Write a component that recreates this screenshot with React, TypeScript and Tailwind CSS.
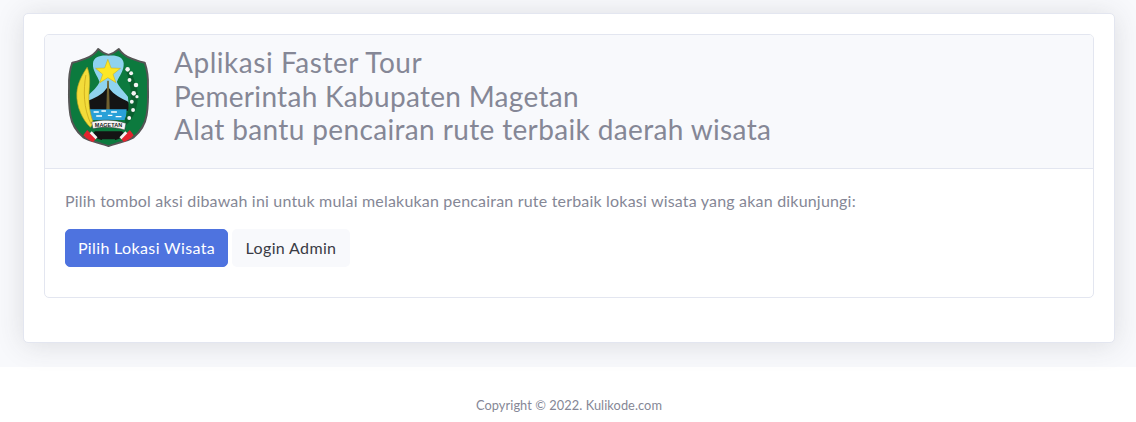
const Emblem = () => (
  <svg width="97" height="115" viewBox="0 0 300 345" preserveAspectRatio="none" className="block">
    <path d="M150 45 C140 42 128 36 118 27 C108 42 95 50 80 55 C66 60 52 66 38 68 C30 90 27 115 28 140 C27 170 27 195 32 225 C36 250 48 272 72 292 C95 305 125 308 150 318 C175 308 205 305 228 292 C252 272 264 250 268 225 C273 195 273 170 272 140 C273 115 270 90 262 68 C248 66 234 60 220 55 C205 50 192 42 182 27 C172 36 160 42 150 45 Z" fill="#0c7a3e" stroke="#555" strokeWidth="6" strokeLinejoin="round" />
    <path d="M150 47 C125 45 104 50 102 70 C100 92 116 108 122 125 C118 140 100 152 84 170 L82 190 L212 190 L210 170 C196 152 180 138 176 125 C184 108 198 92 197 70 C195 50 175 45 150 47 Z" fill="#8fd3ef" />
    <path d="M148 58 L158 84 L187 85 L164 103 L173 128 L148 113 L123 128 L132 103 L110 85 L138 84 Z" fill="#fde725" stroke="#c9a90f" strokeWidth="1.5" />
    <path d="M78 186 C105 175 132 165 144 145 L152 145 C166 165 190 175 212 186 L212 212 L82 212 Z" fill="#141414" />
    <path d="M146 122 L151 122 L154 215 L143 215 Z" fill="#6f6130" />
    <path d="M86 208 L206 208 L203 240 L100 240 Z" fill="#29a0d8" />
    <path d="M104 216 h16 M128 213 h14 M158 216 h18 M112 228 h18 M148 226 h14 M172 230 h18" stroke="#fff" strokeWidth="4" />
    <path d="M84 82 C94 105 92 130 90 155 C88 185 90 215 104 250 L94 262 C70 240 50 200 52 160 C54 130 68 105 84 82 Z" fill="#f3dc3a" stroke="#b9a51e" strokeWidth="2" />
    <path d="M80 105 C72 150 72 205 96 252" stroke="#caa91c" strokeWidth="2.5" fill="none" />
    <path d="M205 80 C225 100 250 150 238 195 C232 220 222 240 205 255 L200 238 C215 210 225 170 215 130 C212 110 205 95 200 85 Z" fill="#0a5f2f" />
    <g fill="#f4f4f4">
      <circle cx="209" cy="88" r="7" /><circle cx="220" cy="100" r="6" />
      <circle cx="215" cy="120" r="6" /><circle cx="235" cy="135" r="7" />
      <circle cx="228" cy="160" r="7" /><circle cx="238" cy="170" r="5" />
      <circle cx="222" cy="185" r="6" /><circle cx="226" cy="210" r="6" />
      <circle cx="214" cy="234" r="6" />
    </g>
    <path d="M108 274 L192 274 L205 288 L172 300 L128 300 L95 288 Z" fill="#141414" />
    <path d="M72 286 L84 270 L112 296 L102 306 C92 302 80 296 72 286 Z" fill="#e3232f" />
    <path d="M228 286 L216 270 L188 296 L198 306 C208 302 220 296 228 286 Z" fill="#e3232f" />
    <path d="M92 280 L98 274 L116 292 L110 298 Z" fill="#f4f4f4" />
    <path d="M208 280 L202 274 L184 292 L190 298 Z" fill="#f4f4f4" />
    <path d="M130 298 L170 298 L172 309 L150 314 L128 309 Z" fill="#0c7a3e" />
    <path d="M98 246 C130 238 170 238 204 250 L200 270 C170 260 130 260 102 266 Z" fill="#f6f6f6" stroke="#333" strokeWidth="1.5" />
    <text x="150" y="260" textAnchor="middle" fontSize="17" fontWeight="700" fontFamily="Liberation Sans, sans-serif" fill="#222">MAGETAN</text>
  </svg>
);

export default function App() {
  return (
    <div className="min-h-[422px] bg-white font-['Lato','Noto_Sans',sans-serif] text-[#858796]">
      <div className="h-[367px] bg-[#f8f9fc] pt-[13px] pl-[23px] pr-[21px]">
        <div className="h-[330px] bg-white rounded-[5px] border border-[#e3e6f0] p-5 shadow-[0_2px_28px_0_rgba(58,59,69,0.15)]">
          <div className="h-[264px] rounded-[5px] border border-[#e3e6f0] overflow-hidden">
            <div className="h-[134px] bg-[#f8f9fc] border-b border-[#e3e6f0] flex items-start pl-[15px]">
              <div className="mt-[5px] shrink-0"><Emblem /></div>
              <div className="ml-[17px] mt-[11px] text-[28px] leading-[33.6px] text-[#858796]">
                <div className="tracking-[0.54px]">Aplikasi Faster Tour</div>
                <div className="tracking-[0.3px]">Pemerintah Kabupaten Magetan</div>
                <div className="tracking-[0.36px]">Alat bantu pencairan rute terbaik daerah wisata</div>
              </div>
            </div>
            <div className="px-5 pt-[20px]">
              <p className="text-base leading-6 tracking-[0.19px]">Pilih tombol aksi dibawah ini untuk mulai melakukan pencairan rute terbaik lokasi wisata yang akan dikunjungi:</p>
              <div className="mt-[16px] flex gap-1">
                <button className="h-[38px] w-[163px] rounded-[5px] bg-[#4e73df] text-white text-base tracking-[0.36px] border border-[#4e73df]">Pilih Lokasi Wisata</button>
                <button className="h-[38px] w-[118px] rounded-[5px] bg-[#f8f9fc] text-[#3a3b45] text-base tracking-[0.36px]">Login Admin</button>
              </div>
            </div>
          </div>
        </div>
      </div>
      <div className="h-[55px] flex items-center justify-center text-[12.8px] tracking-[0.07px] pt-[22px] pl-[2px]">Copyright © 2022. Kulikode.com</div>
    </div>
  );
}
